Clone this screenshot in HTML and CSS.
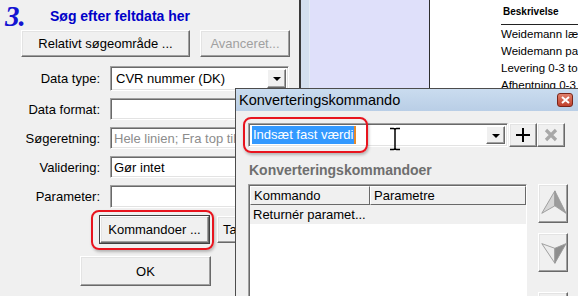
FILE: index.html
```html
<!DOCTYPE html>
<html>
<head>
<meta charset="utf-8">
<link rel="stylesheet" href="styles.css">
</head>
<body>
<div class="screen">
  <div class="panel">
    <div class="head">
      <span class="num">3.</span>
      <span class="head-title">Søg efter feltdata her</span>
    </div>
    <div class="toprow">
      <div class="btn w-rel">Relativt søgeområde ...</div>
      <div class="btn w-adv disabled">Avanceret...</div>
    </div>
    <div class="form">
      <label class="lbl">Data type:</label>
      <div class="field combo"><span class="val">CVR nummer (DK)</span><span class="drop"><i class="tri"></i></span></div>
      <label class="lbl">Data format:</label>
      <div class="field"></div>
      <label class="lbl">Søgeretning:</label>
      <div class="field"><span class="val gray">Hele linien; Fra top til bund</span></div>
      <label class="lbl">Validering:</label>
      <div class="field"><span class="val">Gør intet</span></div>
      <label class="lbl">Parameter:</label>
      <div class="field"></div>
    </div>
    <div class="cmdrow">
      <div class="btn w-cmd default">Kommandoer ...</div>
      <div class="btn w-ta">Tabel ...</div>
    </div>
    <div class="okrow">
      <div class="btn w-ok">OK</div>
    </div>
  </div>
  <div class="sep1"></div>
  <div class="strip"></div>
  <div class="lav"></div>
  <div class="sep2"></div>
  <div class="doc">
    <div class="doc-head">Beskrivelse</div>
    <div class="doc-row">Weidemann læsser</div>
    <div class="doc-row">Weidemann palleløfter</div>
    <div class="doc-row">Levering 0-3 ton</div>
    <div class="doc-row">Afhentning 0-3 ton</div>
  </div>

  <div class="dialog">
    <div class="titlebar">
      <span class="title">Konverteringskommando</span>
      <span class="close">
        <svg width="9" height="8" viewBox="0 0 9 8"><path d="M1 1 L8 7 M8 1 L1 7" stroke="#fff" stroke-width="2"/></svg>
      </span>
    </div>
    <div class="dbody">
      <div class="combo-row">
        <div class="field dcombo"><span class="sel">Indsæt fast værdi</span><span class="drop"><i class="tri"></i></span></div>
        <div class="btn sq plus">
          <svg width="16" height="16" viewBox="0 0 16 16"><path d="M8 1 V15 M1 8 H15" stroke="#000" stroke-width="2"/></svg>
        </div>
        <div class="btn sq xbtn">
          <svg width="16" height="16" viewBox="0 0 16 16"><path d="M3 3 L13 13 M13 3 L3 13" stroke="#a8a8a8" stroke-width="3.2"/></svg>
        </div>
      </div>
      <div class="dhead">Konverteringskommandoer</div>
      <div class="list-row">
        <div class="listview">
          <div class="lv-head">
            <div class="lv-col c1">Kommando</div>
            <div class="lv-col c2">Parametre</div>
          </div>
          <div class="lv-item">Returnér paramet...</div>
        </div>
        <div class="side">
          <div class="btn arrow">
            <svg width="30" height="37" viewBox="0 0 30 37">
              <polygon points="17,5 17,21 3,29" fill="#d6d6d6" stroke="#9a9a9a" stroke-width="1"/>
              <polygon points="17,5 29,29 17,21" fill="#9c9c9c" stroke="#9a9a9a" stroke-width="1"/>
            </svg>
          </div>
          <div class="btn arrow">
            <svg width="30" height="37" viewBox="0 0 30 37">
              <polygon points="3,9 17,14 17,30" fill="#ececec" stroke="#9a9a9a" stroke-width="1"/>
              <polygon points="17,14 29,9 17,30" fill="#8e8e8e" stroke="#9a9a9a" stroke-width="1"/>
            </svg>
          </div>
          <div class="btn arrow third"></div>
        </div>
      </div>
    </div>
  </div>

  <div class="hl hl-combo"></div>
  <div class="hl hl-cmd"></div>
  <svg class="ibeam" width="12" height="24" viewBox="0 0 12 24">
    <path d="M1 1.5 H4.5 Q6 1.5 6 3 Q6 1.5 7.5 1.5 H11 M6 3 V21 M1 22.5 H4.5 Q6 22.5 6 21 Q6 22.5 7.5 22.5 H11" stroke="#000" stroke-width="1.5" fill="none"/>
  </svg>
</div>
</body>
</html>
```
FILE: styles.css
```css
* { box-sizing: border-box; }
html, body { margin: 0; padding: 0; }
body { font-family: "Liberation Sans", Arial, sans-serif; font-size: 13px; color: #000; }

.screen {
  width: 578px; height: 296px; position: relative; overflow: hidden;
  display: flex; background: #f0f0f0;
}

/* left panel */
.panel { width: 299px; flex: none; background: #f0f0f0; display: flex; flex-direction: column; }
.head { height: 30px; display: flex; align-items: center; }
.num {
  width: 45px; margin-left: 5px; padding-top: 2px;
  font-family: "Liberation Serif", serif; font-style: italic; font-weight: bold;
  font-size: 29px; line-height: 28px; color: #1414d2; letter-spacing: -1px;
}
.head-title { font-weight: bold; font-size: 14px; color: #0000c8; padding-top: 1px; }

.btn {
  background: #f0f0f0;
  border: 1px solid; border-color: #fff #696969 #696969 #fff;
  box-shadow: inset -1px -1px #a0a0a0, inset 1px 1px #e3e3e3;
  display: flex; align-items: center; justify-content: center;
  white-space: nowrap; overflow: hidden;
}
.btn.disabled { color: #a0a0a0; }
.btn.default { outline: 1px solid #404040; }

.toprow { display: flex; gap: 10px; padding-left: 21px; height: 27px; }
.w-rel { width: 169px; }
.w-adv { width: 90px; }

.form {
  display: grid; grid-template-columns: 100px 179px; column-gap: 10px;
  grid-template-rows: 25px 22px 22px 22px 23px; row-gap: 7px; margin-top: 9px;
}
.lbl { text-align: right; align-self: center; }
.field {
  background: #fff;
  border: 1px solid; border-color: #a0a0a0 #fff #fff #a0a0a0;
  box-shadow: inset 1px 1px #696969, inset -1px -1px #e3e3e3;
  display: flex; align-items: center; overflow: hidden; white-space: nowrap;
}
.val { padding-left: 3px; flex: 1; }
.val.gray { color: #8c8c8c; }
.drop {
  width: 19px; height: 100%; flex: none;
  display: flex; align-items: center; justify-content: center;
  background: #f0f0f0;
  border: 1px solid; border-color: #fff #696969 #696969 #fff;
  box-shadow: inset -1px -1px #a0a0a0;
}
.tri {
  width: 0; height: 0; margin-top: 1px;
  border-left: 4px solid transparent; border-right: 4px solid transparent;
  border-top: 4px solid #000;
}
.combo { padding: 2px; }

.cmdrow { display: flex; gap: 8px; padding-left: 100px; margin-top: 8px; height: 27px; }
.w-cmd { width: 109px; }
.w-ta { width: 80px; justify-content: flex-start; padding-left: 5px; }
.okrow { margin-top: 13px; padding-left: 80px; height: 30px; display: flex; }
.w-ok { width: 131px; }

/* background windows */
.sep1 { width: 2px; flex: none; background: #3a3a3a; }
.strip { width: 9px; flex: none; background: #d4e0ee; border-right: 1px solid #e4ecf6; }
.lav { width: 119px; flex: none; background: #dfe0fa; }
.sep2 { width: 1px; flex: none; background: #2e2e2e; }
.doc { flex: 1; background: #fff; padding-left: 71px; padding-top: 6px; overflow: hidden; }
.doc-head {
  font-weight: bold; font-size: 10px; height: 19px; line-height: 12px; padding-left: 2px;
  border-bottom: 1px solid #222; margin-bottom: 1px;
}
.doc-row { font-size: 11.5px; line-height: 17px; white-space: nowrap; }

/* dialog */
.dialog {
  position: absolute; left: 235px; top: 88px; width: 343px; height: 208px;
  border-left: 1px solid #4c4c4c; border-top: 1px solid #4c4c4c;
  background: #f0f0f0; display: flex; flex-direction: column;
}
.titlebar {
  height: 22px; flex: none; display: flex; align-items: center; justify-content: space-between;
  background: linear-gradient(#cadcef, #b9cee6); padding-left: 3px; padding-right: 5px;
}
.title { font-size: 14.5px; color: #000; }
.close {
  width: 16px; height: 14px; border-radius: 3px;
  background: linear-gradient(#e0806c, #c0402c);
  border: 1px solid #7a2418;
  display: flex; align-items: center; justify-content: center;
}
.dbody { padding: 12px 0 0 12px; display: flex; flex-direction: column; }
.combo-row { display: flex; height: 24px; }
.dcombo { width: 260px; padding: 2px; }
.sel {
  background: #3399ff; color: #fff; margin-left: 1px; height: 18px; line-height: 18px;
  padding: 0 1px; border-right: 2px solid #e88a2a;
}
.dcombo .drop { margin-left: auto; }
.sq { width: 28px; height: 24px; flex: none; }
.plus { margin-left: 1px; }

.dhead { margin-top: 15px; height: 18px; font-weight: bold; font-size: 14px; color: #6e6e6e; padding-left: 1px; }
.list-row { display: flex; gap: 11px; margin-top: 4px; }
.listview {
  width: 279px; height: 130px; background: #fff;
  border: 1px solid; border-color: #a0a0a0 #fff #fff #a0a0a0;
  box-shadow: inset 1px 1px #696969;
  padding: 1px 0 0 1px;
}
.lv-head { display: flex; height: 19px; }
.lv-col {
  background: #f0f0f0; border: 1px solid; border-color: #fff #696969 #696969 #fff;
  padding-left: 3px; line-height: 17px;
}
.c1 { width: 120px; }
.c2 { flex: 1; }
.lv-item { background: #f0f0f0; height: 19px; line-height: 19px; padding-left: 3px; }
.side { display: flex; flex-direction: column; }
.arrow { width: 30px; height: 39px; }
.arrow + .arrow { margin-top: 10px; }
.arrow.third { margin-top: 20px; }

/* annotations */
.hl {
  position: absolute; border: 2px solid #e8141e; border-radius: 8px;
  box-shadow: 1px 2px 3px rgba(0,0,0,0.25);
}
.hl-combo { left: 243px; top: 117px; width: 125px; height: 36px; }
.hl-cmd { left: 91px; top: 210px; width: 123px; height: 40px; }
.ibeam { position: absolute; left: 389px; top: 127px; }
```
